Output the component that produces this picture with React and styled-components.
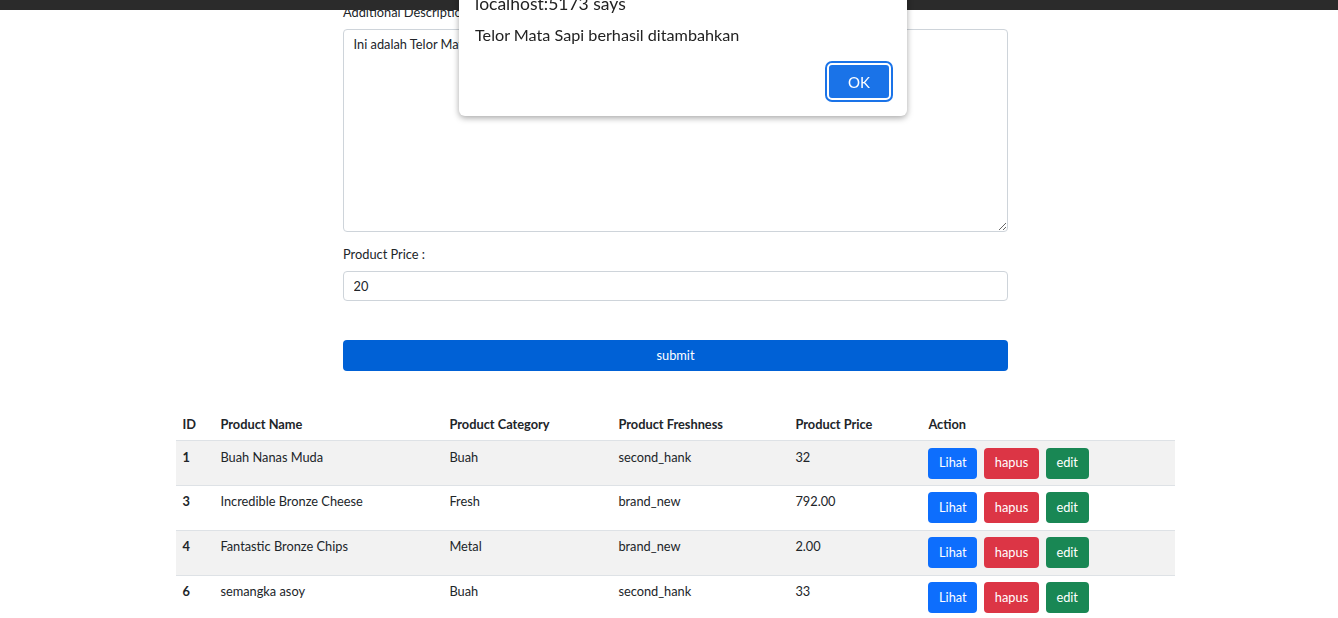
import React from "react";
import styled, { createGlobalStyle } from "styled-components";

const Global = createGlobalStyle`
  html, body { margin: 0; padding: 0; background: #fff; }
  body { font-family: Lato, "Noto Sans", sans-serif; color: #212529; font-size: 12.8px; line-height: 19.2px; overflow: hidden; }
  * { box-sizing: border-box; }
`;

const TopStrip = styled.div`
  position: fixed; top: 0; left: 0; right: 0; height: 10px; background: #2b2b2b; z-index: 5;
`;

const Page = styled.div`
  position: relative;
  width: 999px;
  margin-left: 176px;
  padding-top: 3px;
`;

const Form = styled.form`
  width: 665px;
  margin-left: 167px;
  display: flex; flex-direction: column;
`;

const Label = styled.label`
  display: block; margin-bottom: 6.4px; color: #212529;
`;

const Group = styled.div`
  margin-bottom: ${p => p.$mb ?? 13.6}px;
`;

const TextArea = styled.textarea`
  display: block; width: 100%; height: 203px; resize: vertical;
  border: 1px solid #ced4da; border-radius: 4px; padding: 5px 9.6px;
  font: inherit; color: #212529; outline: none;
`;

const Input = styled.input`
  display: block; width: 100%; height: 30.4px;
  border: 1px solid #ced4da; border-radius: 4px; padding: 4px 9.6px;
  font: inherit; color: #212529; outline: none;
`;

const Submit = styled.button`
  width: 100%; height: 31px; border: none; border-radius: 4px;
  background: #0061d6; color: #fff; font: inherit; margin-top: 39px;
`;

const Table = styled.table`
  width: 100%; border-collapse: collapse; margin-top: 37px;
`;

const Th = styled.th`
  text-align: left; font-weight: 700; padding: 6.4px; border-bottom: 1px solid #dee2e6;
  width: ${p => p.$w}px;
`;

const Tr = styled.tr`
  background: ${p => (p.$odd ? "#f2f2f2" : "#fff")};
`;

const Td = styled.td`
  padding: 6.4px; vertical-align: top; border-bottom: 1px solid #dee2e6;
  font-weight: ${p => (p.$bold ? 700 : 400)};
  height: 44px;
`;

const Actions = styled.div`
  display: flex; gap: 7px;
`;

const Btn = styled.button`
  height: 31px; padding: 0 10.6px; border: none; border-radius: 4px;
  font: inherit; color: #fff; background: ${p => p.$bg};
`;

const Dialog = styled.div`
  position: absolute; left: 459px; top: -20px; width: 448px; height: 136px;
  background: #fff; border-radius: 0 0 6px 6px; z-index: 10;
  box-shadow: 0 2px 6px rgba(0,0,0,0.35);
  padding: 14px 16px 16px 16px;
  display: flex; flex-direction: column;
  font-family: Lato, "Noto Sans", sans-serif;
`;

const DTitle = styled.div`
  font-size: 17.5px; color: #222; line-height: 20px; margin-bottom: 11px;
`;

const DMsg = styled.div`
  font-size: 16.2px; color: #222; line-height: 20px;
`;

const DFoot = styled.div`
  margin-top: auto; display: flex; justify-content: flex-end;
`;

const Ok = styled.button`
  width: 64px; height: 37px; background: #1a73e8; color: #fff; font-size: 15px;
  border: 2px solid #fff; border-radius: 5px; box-shadow: 0 0 0 2px #1a73e8;
  font-family: inherit;
`;

const rows = [
  ["1", "Buah Nanas Muda", "Buah", "second_hank", "32"],
  ["3", "Incredible Bronze Cheese", "Fresh", "brand_new", "792.00"],
  ["4", "Fantastic Bronze Chips", "Metal", "brand_new", "2.00"],
  ["6", "semangka asoy", "Buah", "second_hank", "33"],
];

export default function App() {
  return (
    <>
      <Global />
      <TopStrip />
      <Dialog>
        <DTitle>localhost:5173 says</DTitle>
        <DMsg>Telor Mata Sapi berhasil ditambahkan</DMsg>
        <DFoot><Ok>OK</Ok></DFoot>
      </Dialog>
      <Page>
        <Form onSubmit={e => e.preventDefault()}>
          <Group>
            <Label>Additional Description :</Label>
            <TextArea defaultValue="Ini adalah Telor Mata Sapi" />
          </Group>
          <Group $mb={0}>
            <Label>Product Price :</Label>
            <Input defaultValue="20" />
          </Group>
          <Submit type="submit">submit</Submit>
        </Form>
        <Table>
          <thead>
            <tr>
              <Th $w={38}>ID</Th>
              <Th $w={229}>Product Name</Th>
              <Th $w={169}>Product Category</Th>
              <Th $w={177}>Product Freshness</Th>
              <Th $w={133}>Product Price</Th>
              <Th>Action</Th>
            </tr>
          </thead>
          <tbody>
            {rows.map((r, i) => (
              <Tr key={r[0]} $odd={i % 2 === 0}>
                <Td $bold>{r[0]}</Td>
                <Td>{r[1]}</Td>
                <Td>{r[2]}</Td>
                <Td>{r[3]}</Td>
                <Td>{r[4]}</Td>
                <Td>
                  <Actions>
                    <Btn $bg="#0d6efd">Lihat</Btn>
                    <Btn $bg="#dc3545">hapus</Btn>
                    <Btn $bg="#198754">edit</Btn>
                  </Actions>
                </Td>
              </Tr>
            ))}
          </tbody>
        </Table>
      </Page>
    </>
  );
}
